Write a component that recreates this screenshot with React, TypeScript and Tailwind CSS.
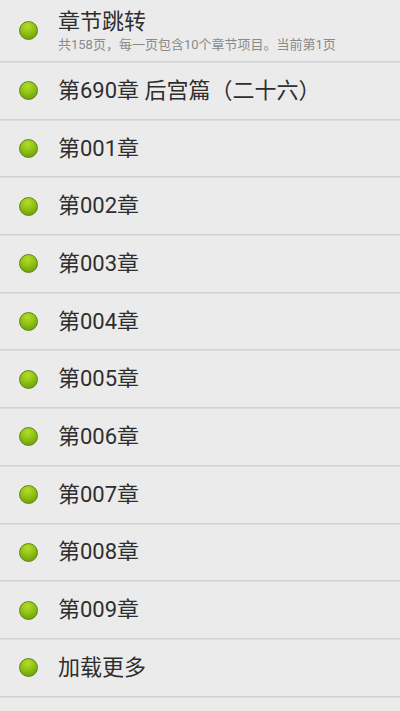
const chapters = [
  "第690章 后宫篇（二十六）",
  "第001章",
  "第002章",
  "第003章",
  "第004章",
  "第005章",
  "第006章",
  "第007章",
  "第008章",
  "第009章",
  "加载更多",
]

function Dot() {
  return (
    <div className="w-[19px] h-[19px] shrink-0 rounded-full border border-[#5f8512] bg-[radial-gradient(circle_at_45%_25%,#b4dc2a_0%,#8fc214_45%,#62900b_100%)]" />
  )
}

function Divider() {
  return (
    <div className="flex flex-col">
      <div className="h-px bg-[#d2d2d2]" />
      <div className="h-px bg-[#dddddd]" />
    </div>
  )
}

export default function App() {
  return (
    <div
      className="w-[400px] h-[711px] overflow-hidden bg-[#ebebeb] text-[#2e2e2e]"
      style={{ fontFamily: 'Roboto, "Noto Sans CJK SC", sans-serif' }}
    >
      {/* 章节跳转 */}
      <div className="h-[61px] flex items-center pl-[19px]">
        <Dot />
        <div className="ml-[20px] flex flex-col">
          <span className="text-[22px] leading-[26px]">章节跳转</span>
          <span className="text-[13px] leading-[16px] text-[#8a8a8a] mt-[2px]">
            共158页，每一页包含10个章节项目。当前第1页
          </span>
        </div>
      </div>
      <Divider />

      {chapters.map((c) => (
        <div key={c}>
          <div className="h-[55.7px] flex items-center pl-[19px]">
            <Dot />
            <span className="ml-[20px] text-[22px] leading-none">{c}</span>
          </div>
          <Divider />
        </div>
      ))}
    </div>
  )
}
